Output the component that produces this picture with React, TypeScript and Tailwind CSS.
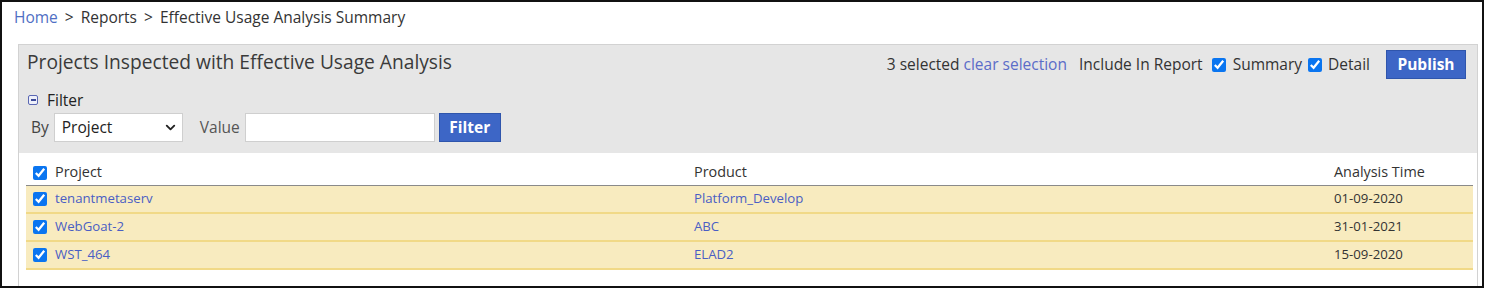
import { ChevronDown } from 'lucide-react';

type Row = {
    project: string;
    product: string;
    time: string;
};

const rows: Row[] = [
    { project: 'tenantmetaserv', product: 'Platform_Develop', time: '01-09-2020' },
    { project: 'WebGoat-2', product: 'ABC', time: '31-01-2021' },
    { project: 'WST_464', product: 'ELAD2', time: '15-09-2020' },
];

const font = { fontFamily: '"Open Sans", "Noto Sans", sans-serif' };

function Check() {
    return <input type="checkbox" defaultChecked className="w-[14px] h-[14px] accent-[#0a75f0]" />;
}

export default function App() {
    return (
        <div style={font} className="w-[1485px] h-[288px] bg-white overflow-hidden">
            <div className="w-[1484px] h-[288px] border-2 border-[#111] overflow-hidden text-[#333]">
                {/* Breadcrumb */}
                <div className="pl-3 pt-[5px] text-[15.5px] leading-5">
                    <span className="text-[#4f6fc4]">Home</span>
                    <span className="mx-[7px]">&gt;</span>
                    <span>Reports</span>
                    <span className="mx-[7px]">&gt;</span>
                    <span>Effective Usage Analysis Summary</span>
                </div>

                {/* Panel */}
                <div className="ml-4 mr-[4px] mt-[17px] border border-[#d2d2d2] border-b-0 bg-white">
                    <div className="bg-[#e6e6e6] px-2 pt-[5px] pb-[11px] flex justify-between items-start">
                        <div>
                            <h1 className="text-[19.2px] leading-6 text-[#3a3a3a]">
                                Projects Inspected with Effective Usage Analysis
                            </h1>
                            <div className="mt-[16px] flex items-center gap-[9px] pl-[1px] text-[15.5px] leading-5">
                                <span className="inline-flex w-[10px] h-[10px] border border-[#5a67b3] rounded-[2px] bg-[#eef0fa] items-center justify-center">
                                    <span className="w-[5px] h-[1.5px] bg-[#3d4a99]" />
                                </span>
                                <span className="text-[#222] font-medium">Filter</span>
                            </div>
                            <div className="mt-[3px] flex items-center text-[15.5px]">
                                <span className="ml-[4px] text-[#444]">By</span>
                                <div className="ml-[5px] relative w-[129px] h-[29px] bg-white border border-[#cfcfcf] flex items-center">
                                    <span className="pl-[7px] text-[#222]">Project</span>
                                    <ChevronDown className="absolute right-[4px] w-[15px] h-[15px] text-[#222]" strokeWidth={3} />
                                </div>
                                <span className="ml-[17px] text-[#555]">Value</span>
                                <input className="ml-[5px] w-[190px] h-[29px] bg-white border border-[#cfcfcf] outline-none" />
                                <button className="ml-[4px] w-[62px] h-[29px] bg-[#3d66c6] border border-[#2f55ac] text-white font-bold">
                                    Filter
                                </button>
                            </div>
                        </div>

                        <div className="flex items-center text-[15.5px] mr-[3px]">
                            <span className="text-[#333]">3 selected</span>
                            <span className="ml-[4px] text-[#5b6cc8]">clear selection</span>
                            <span className="ml-[12px] text-[#333]">Include In Report</span>
                            <span className="ml-[9px] flex"><Check /></span>
                            <span className="ml-[7px]">Summary</span>
                            <span className="ml-[6px] flex"><Check /></span>
                            <span className="ml-[6px]">Detail</span>
                            <button className="ml-[16px] w-[80px] h-[29px] bg-[#3d66c6] border border-[#2f55ac] text-white font-bold">
                                Publish
                            </button>
                        </div>
                    </div>

                    {/* Table */}
                    <div className="pl-[7px] pr-[4px] pt-[7px] pb-6">
                        <div className="grid grid-cols-[29px_639px_640px_1fr] h-[26px] items-center border-b border-[#8a8a8a] text-[14.4px] text-[#333]">
                            <span className="pl-[7px] flex"><Check /></span>
                            <span className="-mt-[2px]">Project</span>
                            <span className="-mt-[2px]">Product</span>
                            <span className="-mt-[2px]">Analysis Time</span>
                        </div>
                        {rows.map((row) => (
                            <div
                                key={row.project}
                                className="grid grid-cols-[29px_639px_640px_1fr] h-[28px] items-center bg-[#f8ebbf] border-b-2 border-[#f1d987] text-[13.2px]"
                            >
                                <span className="pl-[7px] flex"><Check /></span>
                                <span className="text-[#4a5ec4]">{row.project}</span>
                                <span className="text-[#4a5ec4]">{row.product}</span>
                                <span className="text-[#333]">{row.time}</span>
                            </div>
                        ))}
                    </div>
                </div>
            </div>
        </div>
    );
}
